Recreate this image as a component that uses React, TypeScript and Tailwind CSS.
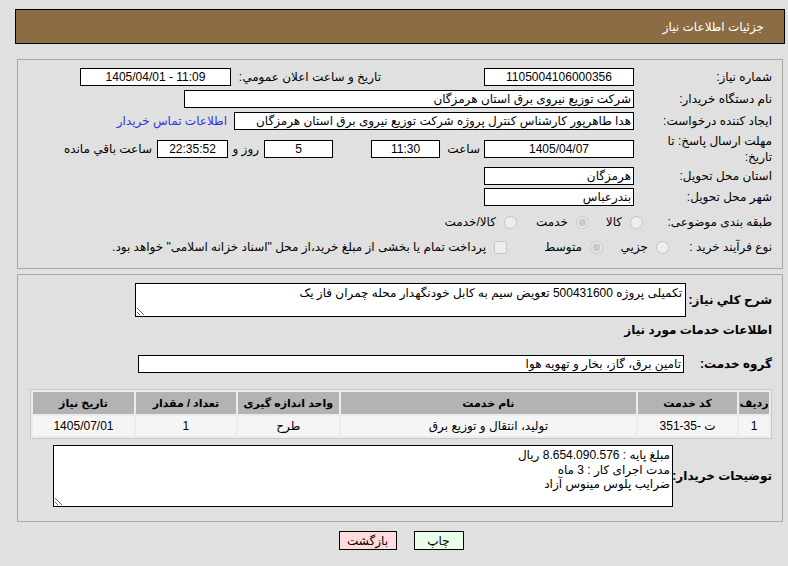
import React from "react";

const Box = ({ className = "", children, ltr = false }: { className?: string; children?: React.ReactNode; ltr?: boolean }) => (
  <div
    dir={ltr ? "ltr" : undefined}
    className={
      "h-[18px] shrink-0 overflow-hidden whitespace-nowrap border border-black bg-white px-[2px] text-[12px] leading-[16px] " +
      className
    }
  >
    {children}
  </div>
);

const Radio = ({ checked = false }: { checked?: boolean }) => (
  <input
    type="radio"
    disabled
    checked={checked}
    readOnly
    className="m-0 h-[13px] w-[13px] shrink-0"
  />
);

export default function App() {
  return (
    <div
      dir="rtl"
      className="min-h-[566px] w-full overflow-hidden bg-[#e0e0e0] pt-[9px] text-[12px] text-black font-[family-name:Tahoma,'Liberation_Sans','DejaVu_Sans',sans-serif]"
    >
      {/* Header */}
      <div className="mr-[3px] flex h-[35px] w-[770px] items-center border border-black bg-[#8c6d43] pr-[20px] text-[12px] text-white">
        جزئیات اطلاعات نیاز
      </div>

      {/* Panel 1 */}
      <div className="mr-[5px] mt-[15px] h-[210px] w-[766px] border border-[#a8a8a8] pr-[10px] pt-[6px]">
        {/* row 1 */}
        <div className="flex h-[22px] items-center">
          <div className="w-[138px] shrink-0">شماره نیاز:</div>
          <Box className="w-[150px] text-center">1105004106000356</Box>
          <div className="w-[103px] shrink-0" />
          <div className="w-[150px] shrink-0">تاریخ و ساعت اعلان عمومي:</div>
          <Box ltr className="w-[151px] text-center">1405/04/01 - 11:09</Box>
        </div>
        {/* row 2 */}
        <div className="flex h-[22px] items-center">
          <div className="w-[138px] shrink-0">نام دستگاه خریدار:</div>
          <Box className="w-[450px]">شرکت توزیع نیروی برق استان هرمزگان</Box>
        </div>
        {/* row 3 */}
        <div className="flex h-[22px] items-center">
          <div className="w-[138px] shrink-0">ایجاد کننده درخواست:</div>
          <Box className="w-[400px]">هدا طاهرپور کارشناس کنترل پروژه شرکت توزیع نیروی برق استان هرمزگان</Box>
          <div className="mr-[7px] text-[#3333dd]">اطلاعات تماس خریدار</div>
        </div>
        {/* row 4 */}
        <div className="flex h-[33px] items-center">
          <div className="w-[138px] shrink-0 leading-[16px]">
            مهلت ارسال پاسخ: تا
            <br />
            تاریخ:
          </div>
          <Box className="w-[150px] text-center">1405/04/07</Box>
          <div className="mr-[4px] w-[35px] shrink-0">ساعت</div>
          <Box className="mr-[5px] w-[69px] text-center">11:30</Box>
          <Box className="mr-[38px] w-[69px] text-center">5</Box>
          <div className="mr-[5px] w-[28px] shrink-0">روز و</div>
          <Box className="mr-[3px] w-[71px] bg-[#fdfdea] text-center">22:35:52</Box>
          <div className="mr-[5px]">ساعت باقي مانده</div>
        </div>
        {/* row 5 */}
        <div className="flex h-[21px] items-center">
          <div className="w-[138px] shrink-0">استان محل تحویل:</div>
          <Box className="w-[150px]">هرمزگان</Box>
        </div>
        {/* row 6 */}
        <div className="flex h-[22px] items-center">
          <div className="w-[138px] shrink-0">شهر محل تحویل:</div>
          <Box className="w-[150px]">بندرعباس</Box>
        </div>
        {/* row 7 */}
        <div className="mt-[2px] flex h-[24px] items-center">
          <div className="w-[129px] shrink-0">طبقه بندی موضوعی:</div>
          <div className="flex w-[54px] shrink-0 items-center gap-[8px]">
            <Radio />
            <span>کالا</span>
          </div>
          <div className="flex w-[72px] shrink-0 items-center gap-[8px]">
            <Radio checked />
            <span>خدمت</span>
          </div>
          <div className="flex shrink-0 items-center gap-[8px]">
            <Radio />
            <span>کالا/خدمت</span>
          </div>
        </div>
        {/* row 8 */}
        <div className="mt-[2px] flex h-[22px] items-center">
          <div className="w-[103px] shrink-0">نوع فرآیند خرید :</div>
          <div className="flex w-[66px] shrink-0 items-center gap-[8px]">
            <Radio />
            <span>جزيي</span>
          </div>
          <div className="flex w-[96px] shrink-0 items-center gap-[8px]">
            <Radio checked />
            <span>متوسط</span>
          </div>
          <div className="flex shrink-0 items-center gap-[8px]">
            <input type="checkbox" disabled className="m-0 h-[13px] w-[13px]" />
            <span>پرداخت تمام یا بخشی از مبلغ خرید،از محل "اسناد خزانه اسلامی" خواهد بود.</span>
          </div>
        </div>
      </div>

      {/* Panel 2 */}
      <div className="mr-[5px] mt-[5px] h-[248px] w-[766px] border border-[#a8a8a8] pr-[10px] pt-[8px]">
        <div className="flex items-center">
          <div className="w-[86px] shrink-0 whitespace-nowrap text-[12px] font-bold">شرح کلي نیاز:</div>
          <textarea
            readOnly
            value="تکمیلی پروژه 500431600 تعویض سیم به کابل خودنگهدار محله چمران فاز یک"
            className="block h-[34px] w-[551px] shrink-0 resize border border-black bg-white px-[3px] py-[2px] text-[12px] leading-[15px] outline-none"
          />
        </div>
        <div className="mt-[5px] h-[16px] whitespace-nowrap text-[12px] font-bold leading-[16px]">اطلاعات خدمات مورد نیاز</div>
        <div className="mt-[17px] flex items-center">
          <div className="w-[88px] shrink-0 whitespace-nowrap text-[12px] font-bold">گروه خدمت:</div>
          <Box className="w-[546px]">تامین برق، گاز، بخار و تهویه هوا</Box>
        </div>
        <table className="-ml-[1px] mt-[16px] w-[742px] border-separate border-spacing-[2px] border border-[#c8c8c8] bg-[#ececec] text-[12px]">
          <thead>
            <tr className="h-[22px] bg-[#b3b3b3] text-[11px] font-bold">
              <th className="w-[30px] p-0 font-bold">ردیف</th>
              <th className="w-[99px] p-0 font-bold">کد خدمت</th>
              <th className="w-[296px] p-0 font-bold">نام خدمت</th>
              <th className="w-[101px] p-0 font-bold">واحد اندازه گیری</th>
              <th className="w-[100px] p-0 font-bold">تعداد / مقدار</th>
              <th className="w-[101px] p-0 font-bold">تاریخ نیاز</th>
            </tr>
          </thead>
          <tbody>
            <tr className="h-[20px] bg-[#f5f5f5] text-center">
              <td className="p-0">1</td>
              <td className="p-0">ت -35-351</td>
              <td className="p-0">تولید، انتقال و توزیع برق</td>
              <td className="p-0">طرح</td>
              <td className="p-0">1</td>
              <td className="p-0">1405/07/01</td>
            </tr>
          </tbody>
        </table>
        <div className="mt-[6px] flex items-center">
          <div className="w-[99px] shrink-0 whitespace-nowrap text-[12px] font-bold">توضیحات خریدار:</div>
          <textarea
            readOnly
            value={"مبلغ پایه : 8.654.090.576 ریال\nمدت اجرای کار : 3 ماه\nضرایب پلوس مینوس آزاد"}
            className="block h-[62px] w-[620px] shrink-0 resize border border-black bg-white px-[2px] py-[2px] text-[12px] leading-[14.5px] outline-none"
          />
        </div>
      </div>

      {/* Buttons */}
      <div className="mt-[9px] flex justify-center gap-[17px] pl-[14px]">
        <button className="h-[19px] w-[50px] border border-black bg-[#eaffea] text-[12px] leading-[16px]">چاپ</button>
        <button className="h-[19px] w-[58px] border border-black bg-[#ffdcdc] text-[12px] leading-[16px]">بازگشت</button>
      </div>
    </div>
  );
}
